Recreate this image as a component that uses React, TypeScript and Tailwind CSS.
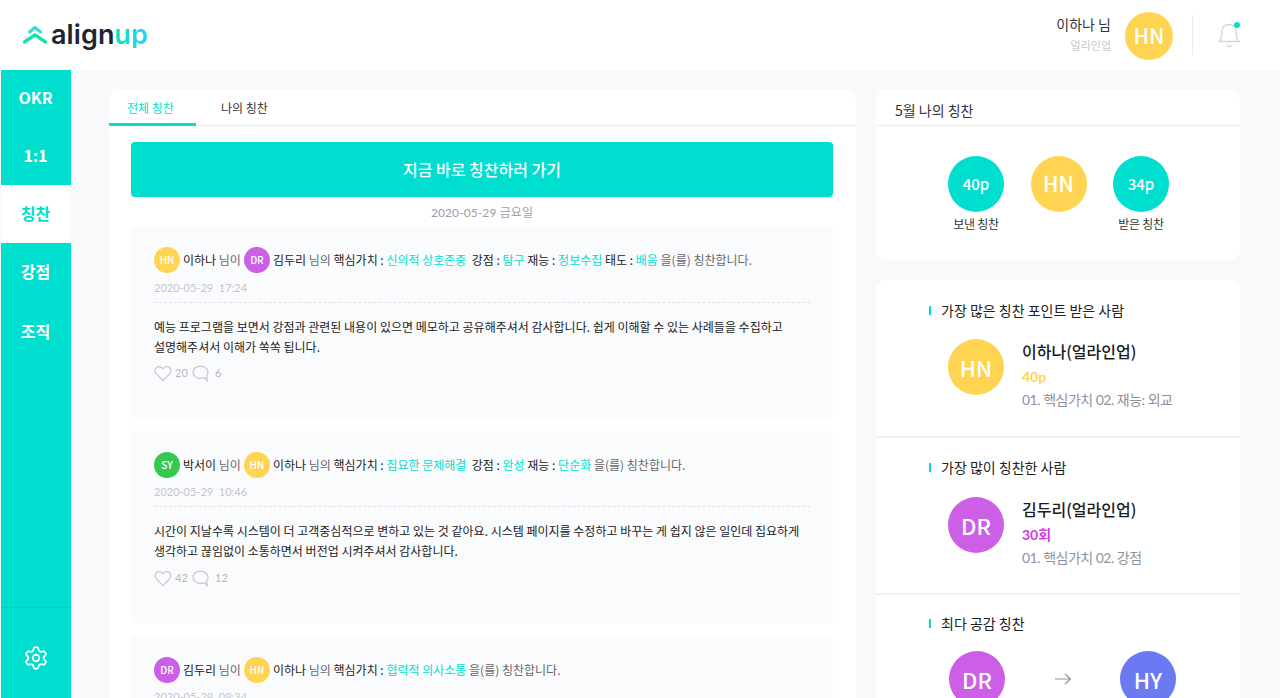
import { Settings } from 'lucide-react';

const KR = '[font-family:"Noto_Sans_CJK_KR",sans-serif]';
const DATE = '[font-family:Lato,"Noto_Sans_CJK_KR",sans-serif]';

const NAV = [
  { label: 'OKR', h: 'h-[57px] pb-[4px]' },
  { label: '1:1', h: 'h-[58px] pb-[2px]' },
  { label: '칭찬', h: 'h-[58px] pb-[2px]', active: true },
  { label: '강점', h: 'h-[58px] pb-[2px]' },
  { label: '조직', h: 'h-[60px]' },
];

const COLORS: Record<string, string> = {
  HN: 'bg-[#ffd452]',
  DR: 'bg-[#cd5fe6]',
  SY: 'bg-[#36c94f]',
  HY: 'bg-[#6b79f2]',
};

function Avatar({ who, size }: { who: string; size: string }) {
  return <span className={`inline-flex shrink-0 items-center justify-center rounded-full text-white font-medium ${COLORS[who]} ${size}`}>{who}</span>;
}

function Hl({ children }: { children: string }) {
  return <span className="text-[#00dfcf]">{children}</span>;
}

function Heart() {
  return (
    <svg width="18" height="17" viewBox="0 0 18 17" fill="none" stroke="#c3c6ce" strokeWidth="1.2">
      <path d="M9 15.6 2.4 8.9C.6 7 .7 4.2 2.4 2.6 4.200 1 6.900 1.200 9 3.700 11.100 1.200 13.800 1 15.600 2.600 17.300 4.200 17.400 7 15.600 8.900Z" />
    </svg>
  );
}

function Bubble() {
  return (
    <svg width="17" height="17" viewBox="0 0 17 17" fill="none" stroke="#c3c6ce" strokeWidth="1.2">
      <path d="M8.500 1.200C4.400 1.200 1 3.900 1 7.300 1 10.700 4.400 13.400 8.500 13.400 9.900 13.400 11.200 13.100 12.300 12.500L15.200 15.600 14.600 10.900C15.500 9.900 16 8.700 16 7.300 16 3.900 12.600 1.200 8.500 1.200Z" />
    </svg>
  );
}

function Post({ head, date, lines, like, reply, h, top, dateGap, iconGap }: { head: React.ReactNode; date: string; lines: string[]; like: number; reply: number; h: string; top: string; dateGap: string; iconGap: string }) {
  return (
    <div className={`shrink-0 rounded bg-[#fafbfd] px-[23px] ${top} ${h}`}>
      <div className="flex h-[27px] items-center gap-[3px] text-[12px] text-[#222] whitespace-nowrap">{head}</div>
      <div className={`${DATE} ${dateGap} h-[17px] text-[11px] leading-[17px] text-[#c3c6ce] whitespace-pre`}>{date}</div>
      <div className="mt-[6px] border-t border-dashed border-[#dfe1e6]" />
      <div className="mt-[14px] text-[12px] leading-[20px] text-[#222] whitespace-nowrap">
        {lines.map(l => <div key={l}>{l}</div>)}
      </div>
      <div className={`${DATE} ${iconGap} flex items-center text-[11px] text-[#b5b8c0]`}>
        <Heart /><span className="ml-[3px] w-[17px]">{like}</span><Bubble /><span className="ml-[6px]">{reply}</span>
      </div>
    </div>
  );
}

function Title({ children }: { children: string }) {
  return (
    <div className="flex items-center text-[14px] leading-[20px] text-[#222]">
      <span className="mr-[10px] h-[9px] w-[2px] bg-[#00dfcf]" />{children}
    </div>
  );
}

function Person({ who, name, point, color, desc, gap }: { who: string; name: string; point: string; color: string; desc: string; gap: string }) {
  return (
    <div className={`ml-[19px] flex items-start gap-[18px] ${gap}`}>
      <Avatar who={who} size="h-14 w-14 text-[22px]" />
      <div>
        <div className="text-[16px] font-medium leading-[24px] text-[#1a1c24]">{name}</div>
        <div className={`${DATE} mt-[4px] text-[14px] font-bold leading-[20px] ${color}`}>{point}</div>
        <div className={`${DATE} mt-[3px] text-[14px] leading-[20px] tracking-[-0.5px] text-[#8d92a0]`}>{desc}</div>
      </div>
    </div>
  );
}

export default function App() {
  return (
    <div className={`${KR} flex h-[698px] w-[1280px] flex-col overflow-hidden bg-white`}>
      <header className="flex h-[70px] shrink-0 items-center pl-[23px] pr-[40px]">
        <svg width="24" height="20" viewBox="0 0 24 20" fill="none" strokeLinecap="round" strokeLinejoin="round">
          <path d="M6.500 7 12 2.500 17.500 7" stroke="#35dcd6" strokeWidth="3" />
          <path d="M1.500 17 12 9.800 22.500 17" stroke="#17e0b0" strokeWidth="3.400" />
        </svg>
        <span className="ml-[4px] -mt-[1px] text-[27px] font-semibold leading-none tracking-[0.1px] text-[#1f2433] [font-family:Inter,sans-serif]">align</span>
        <span className="-mt-[1px] bg-gradient-to-r from-[#15e0b2] to-[#25d4f5] bg-clip-text text-[27px] font-semibold leading-none tracking-[0.1px] text-transparent [font-family:Inter,sans-serif]">up</span>
        <div className="ml-auto mr-[14px] text-right">
          <div className="-mt-[3px] text-[14px] leading-[20px] text-[#333]">이하나 님</div>
          <div className="mt-[3px] text-[11px] leading-[16px] text-[#c5c8d0]">얼라인업</div>
        </div>
        <Avatar who="HN" size="mt-[1px] h-12 w-12 text-[21px]" />
        <div className="ml-[19px] mr-[25px] h-[40px] w-px bg-[#e9eaee]" />
        <div className="relative h-[26px] w-[22px]">
          <svg width="22" height="26" viewBox="0 0 22 26" fill="none" stroke="#d3d5db" strokeWidth="1.300">
            <path d="M1 19.500h20c-1.800-1.800-2.800-3.800-2.800-7V9.500C18.200 5 15 2.500 11 2.500S3.800 5 3.800 9.500v3c0 3.200-1 5.200-2.800 7Z" />
            <path d="M8.500 23l2.500 1.800 2.500-1.800" />
          </svg>
          <span className="absolute right-0 top-0 h-[6px] w-[6px] rounded-full bg-[#00dfcf]" />
        </div>
      </header>

      <div className="flex min-h-0 flex-1 bg-[#f8f9fb]">
        <aside className="ml-px flex w-[70px] shrink-0 flex-col bg-[#00dfcf] text-white">
          {NAV.map(n => (
            <div key={n.label} className={`flex items-center justify-center pr-px text-[16px] font-bold ${n.h} ${n.active ? 'bg-white text-[#00dfcf]' : ''}`}>{n.label}</div>
          ))}
          <div className="mt-auto flex h-[91px] items-center justify-center border-t border-[#00d2c3] pt-[10px]">
            <Settings size={26} strokeWidth={1.700} />
          </div>
        </aside>

        <main className="ml-[38px] mt-[20px] flex h-[700px] w-[747px] shrink-0 flex-col rounded-t-[10px] bg-white">
          <div className="flex h-[36px] shrink-0 border-b border-[#ebecef] text-[12px]">
            <div className="h-[36px] w-[87px] border-b-[3px] border-[#00dfcf] pr-[4px] pt-[9px] text-center leading-[18px] text-[#00dfcf]">전체 칭찬</div>
            <div className="ml-[25px] pt-[9px] leading-[18px] text-[#333]">나의 칭찬</div>
          </div>
          <div className="flex flex-col pl-[22px] pr-[23px] pt-[16px]">
            <div className="flex h-[55px] shrink-0 items-center justify-center rounded bg-[#00dfcf] pb-[2px] text-[16px] font-medium text-white">지금 바로 칭찬하러 가기</div>
            <div className={`${DATE} mt-[8px] h-[22px] text-center text-[12px] leading-[16px] tracking-[0.1px] text-[#9a9ea9]`}>2020-05-29 금요일</div>
            <div className="flex flex-col gap-[13px]">
              <Post
                h="h-[191px]"
                top="pt-[19px]"
                dateGap="mt-[6px]"
                iconGap="mt-[8px]"
                date="2020-05-29  17:24"
                like={20}
                reply={6}
                lines={['예능 프로그램을 보면서 강점과 관련된 내용이 있으면 메모하고 공유해주셔서 감사합니다. 쉽게 이해할 수 있는 사례들을 수집하고', '설명해주셔서 이해가 쏙쏙 됩니다.']}
                head={<>
                  <Avatar who="HN" size="h-[26px] w-[26px] text-[10px]" /><span>이하나 <span className="text-[#666]">님이</span></span>
                  <Avatar who="DR" size="h-[26px] w-[26px] text-[10px]" /><span><span>김두리</span> <span className="text-[#666]">님의</span> 핵심가치 : <Hl>신의적 상호존중</Hl>&nbsp; 강점 : <Hl>탐구</Hl> 재능 : <Hl>정보수집</Hl> 태도 : <Hl>배움</Hl> <span className="text-[#666]">을(를) 칭찬합니다.</span></span>
                </>}
              />
              <Post
                h="h-[192px]"
                top="pt-[20px]"
                dateGap="mt-[5px]"
                iconGap="mt-[9px]"
                date="2020-05-29  10:46"
                like={42}
                reply={12}
                lines={['시간이 지날수록 시스템이 더 고객중심적으로 변하고 있는 것 같아요. 시스템 페이지를 수정하고 바꾸는 게 쉽지 않은 일인데 집요하게', '생각하고 끊임없이 소통하면서 버전업 시켜주셔서 감사합니다.']}
                head={<>
                  <Avatar who="SY" size="h-[26px] w-[26px] text-[10px]" /><span>박서이 <span className="text-[#666]">님이</span></span>
                  <Avatar who="HN" size="h-[26px] w-[26px] text-[10px]" /><span><span>이하나</span> <span className="text-[#666]">님의</span> 핵심가치 : <Hl>집요한 문제해결</Hl>&nbsp; 강점 : <Hl>완성</Hl> 재능 : <Hl>단순화</Hl> <span className="text-[#666]">을(를) 칭찬합니다.</span></span>
                </>}
              />
              <Post
                h="h-[192px]"
                top="pt-[20px]"
                dateGap="mt-[5px]"
                iconGap="mt-[9px]"
                date="2020-05-29  09:34"
                like={18}
                reply={4}
                lines={[]}
                head={<>
                  <Avatar who="DR" size="h-[26px] w-[26px] text-[10px]" /><span>김두리 <span className="text-[#666]">님이</span></span>
                  <Avatar who="HN" size="h-[26px] w-[26px] text-[10px]" /><span><span>이하나</span> <span className="text-[#666]">님의</span> 핵심가치 : <Hl>협력적 의사소통</Hl> <span className="text-[#666]">을(를) 칭찬합니다.</span></span>
                </>}
              />
            </div>
          </div>
        </main>

        <div className="ml-[20px] mt-[20px] flex w-[364px] shrink-0 flex-col">
          <section className="h-[170px] shrink-0 rounded-[10px] bg-white">
            <div className="h-[36px] border-b border-[#ebecef] pl-[19px] pt-[10px] text-[14px] leading-[20px] text-[#333]">5월 나의 칭찬</div>
            <div className="ml-[72px] mt-[30px] flex gap-[26.5px]">
              {[
                { t: '40p', c: 'bg-[#00dfcf]', l: '보낸 칭찬' },
                { t: 'HN', c: 'bg-[#ffd452]', l: '' },
                { t: '34p', c: 'bg-[#00dfcf]', l: '받은 칭찬' },
              ].map(s => (
                <div key={s.t} className="flex w-[56px] flex-col items-center">
                  <span className={`flex h-14 w-14 items-center justify-center rounded-full font-medium text-white ${s.c} ${s.t === 'HN' ? 'text-[21px]' : 'text-[15px]'}`}>{s.t}</span>
                  <span className="mt-[3px] h-[18px] whitespace-nowrap text-[12px] leading-[18px] tracking-[-0.3px] text-[#333]">{s.l}</span>
                </div>
              ))}
            </div>
          </section>

          <section className="mt-[20px] flex flex-col rounded-t-[10px] bg-white">
            <div className="h-[158px] border-b-2 border-[#f1f2f4] pl-[53px] pt-[20px]">
              <Title>가장 많은 칭찬 포인트 받은 사람</Title>
              <Person gap="mt-[19px]" who="HN" name="이하나(얼라인업)" point="40p" color="text-[#ffd452]" desc="01. 핵심가치  02. 재능: 외교" />
            </div>
            <div className="h-[157px] border-b-2 border-[#f1f2f4] pl-[53px] pt-[19px]">
              <Title>가장 많이 칭찬한 사람</Title>
              <Person gap="mt-[20px]" who="DR" name="김두리(얼라인업)" point="30회" color="text-[#cd3fdc]" desc="01. 핵심가치  02. 강점" />
            </div>
            <div className="pl-[53px] pt-[18px]">
              <Title>최다 공감 칭찬</Title>
              <div className="ml-[20px] mt-[18px] flex items-center">
                <Avatar who="DR" size="h-14 w-14 text-[22px]" />
                <svg className="ml-[49px] mr-[48px]" width="18" height="12" viewBox="0 0 18 12" fill="none" stroke="#8d92a0" strokeWidth="1.100"><path d="M1 6h15M11 1l5.500 5-5.500 5" /></svg>
                <Avatar who="HY" size="h-14 w-14 text-[22px]" />
              </div>
            </div>
          </section>
        </div>
      </div>
    </div>
  );
}
